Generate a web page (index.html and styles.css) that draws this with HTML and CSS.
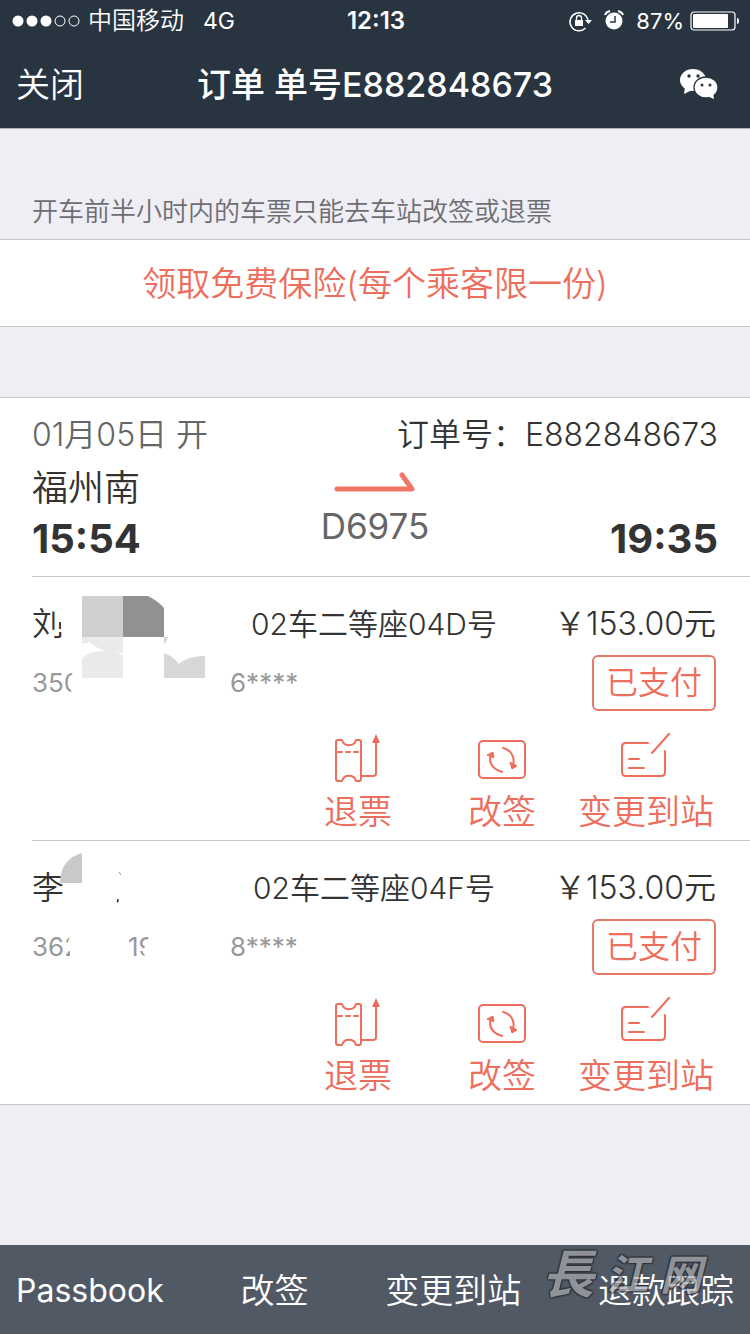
FILE: index.html
```html
<!DOCTYPE html>
<html lang="zh-CN">
<head>
<meta charset="utf-8">
<meta name="viewport" content="width=device-width">
<title>订单 单号E882848673</title>
<link rel="stylesheet" href="styles.css">
</head>
<body>
<svg class="sprite" aria-hidden="true">
  <symbol id="refund" viewBox="0 0 56 56">
    <g fill="none" stroke="currentColor" stroke-width="2" stroke-linejoin="round" stroke-linecap="round">
      <path d="M8 9H12C14 16 24 16 26 9H29Q31 9 31 11V48Q31 50 29 50H26C24 43 14 43 12 50H8Q6 50 6 48V11Q6 9 8 9Z"/>
      <path d="M8 21H31" stroke-dasharray="4 4"/>
      <path d="M32 45H43Q46 45 46 42V10"/>
    </g>
    <path d="M46 3L50 12H42Z" fill="currentColor"/>
  </symbol>
  <symbol id="change" viewBox="0 0 56 56">
    <g fill="none" stroke="currentColor" stroke-width="2" stroke-linecap="round">
      <rect x="5" y="10" width="46" height="37" rx="4"/>
      <path d="M29 17C38 19 42 28 38 36M28 41C19 38 14 32 17 23"/>
    </g>
    <path d="M36 31L38 38L43 35ZM13 24L19 21L20 27Z" fill="currentColor" stroke="currentColor" stroke-linejoin="round"/>
  </symbol>
  <symbol id="station" viewBox="0 0 56 56">
    <g fill="none" stroke="currentColor" stroke-width="2" stroke-linecap="round">
      <path d="M30 12H8Q4 12 4 16V41Q4 45 8 45H43Q47 45 47 41V20M11 28H21M11 37H26M34 22L51 3"/>
    </g>
  </symbol>
</svg>

<header class="top">
  <div class="status">
    <div class="status-left">
      <svg class="signal" viewBox="0 0 68 12" aria-hidden="true">
        <g fill="#fff"><circle cx="6" cy="6" r="5.500"/><circle cx="20" cy="6" r="5.500"/><circle cx="34" cy="6" r="5.500"/></g>
        <g fill="none" stroke="#fff"><circle cx="48" cy="6" r="5"/><circle cx="62" cy="6" r="5"/></g>
      </svg>
      <span>中国移动</span>
      <span class="network">4G</span>
    </div>
    <time class="clock">12:13</time>
    <div class="status-right">
      <svg class="lock" viewBox="0 0 24 22" aria-hidden="true">
        <path d="M17.500 18A9 9 0 1 1 20 11" fill="none" stroke="#fff" stroke-width="1.500"/>
        <path d="M17 10H24L20.500 14Z" fill="#fff"/>
        <rect x="7" y="10" width="8" height="6" fill="#fff"/>
        <path d="M8.500 10V8A2.500 2.500 0 0 1 13.500 8V10" fill="none" stroke="#fff" stroke-width="1.300"/>
      </svg>
      <svg class="alarm" viewBox="0 0 20 22" aria-hidden="true">
        <circle cx="10" cy="11" r="8.500" fill="#fff"/>
        <path d="M1 5Q2 2 6 1M14 1Q18 2 19 5" fill="none" stroke="#fff" stroke-width="2"/>
        <path d="M11 6V12H6" fill="none" stroke="#293441" stroke-width="1.500"/>
      </svg>
      <span class="percent">87%</span>
      <svg class="battery" viewBox="0 0 50 20" aria-hidden="true">
        <rect x="1" y="1" width="44" height="18" rx="3" fill="none" stroke="#fff" stroke-width="1.200"/>
        <rect x="3" y="3" width="35" height="14" rx="1" fill="#fff"/>
        <path d="M47 7Q49 7 49 10Q49 13 47 13Z" fill="#fff"/>
      </svg>
    </div>
  </div>
  <nav class="nav">
    <button class="close" type="button">关闭</button>
    <h1 class="title">订单 单号E882848673</h1>
    <button class="share" type="button" aria-label="微信">
      <svg class="wechat" viewBox="0 0 38 32" aria-hidden="true">
        <ellipse cx="13" cy="11" rx="13" ry="11" fill="#fff"/>
        <path d="M5 18L4 25L12 21Z" fill="#fff"/>
        <ellipse cx="26" cy="18.500" rx="12" ry="10.500" fill="#fff" stroke="#293441" stroke-width="1.300"/>
        <path d="M27 27L34 30L33 24Z" fill="#fff"/>
        <g fill="#293441"><circle cx="9" cy="7" r="1.700"/><circle cx="18" cy="7" r="1.700"/><circle cx="22" cy="16" r="1.500"/><circle cx="30" cy="16" r="1.500"/></g>
      </svg>
    </button>
  </nav>
</header>

<main class="content">
  <p class="hint">开车前半小时内的车票只能去车站改签或退票</p>
  <button class="insurance" type="button">领取免费保险(每个乘客限一份)</button>

  <section class="order">
    <div class="trip">
      <div class="trip-meta">
        <span class="date">01月05日 开</span>
        <span>订单号：E882848673</span>
      </div>
      <div class="route">
        <div>
          <div class="place">福州南</div>
          <time class="time">15:54</time>
        </div>
        <div class="train">
          <svg class="arrow" viewBox="0 0 84 24" aria-hidden="true"><path d="M4 19H79L69 5" fill="none" stroke="#f27566" stroke-width="5" stroke-linecap="round" stroke-linejoin="round"/></svg>
          <span>D6975</span>
        </div>
        <time class="time arrival">19:35</time>
      </div>
    </div>

    <article class="passenger">
      <div class="details">
        <span class="name">刘</span>
        <span>02车二等座04D号</span>
        <span class="price">￥153.00元</span>
      </div>
      <div class="identity">
        <span class="number"><span>350</span><span></span><span>6****</span></span>
        <span class="paid">已支付</span>
      </div>
      <svg class="mosaic" viewBox="32 577 240 130" aria-hidden="true">
        <path d="M57 606H82V650H65V632H57V629H61V622H57Z" fill="#fff"/>
        <path d="M74 665H86V700H74L71 690L70 684L72 675Z" fill="#fff"/>
        <path d="M82 596H123V637H82Z" fill="#cfcfcf"/>
        <path d="M123 596H148Q158 601 164 608V637H123Z" fill="#919191"/>
        <path d="M82 637H123V653L105 651Q96 648 90 642L82 644Z" fill="#eaeaea"/>
        <path d="M82 658Q90 651 105 651Q118 651 123 656V678H82Z" fill="#eaeaea"/>
        <path d="M164 637H168Q167 642 164 644ZM164 653Q173 656 179 664Q188 656 205 656V678H164Z" fill="#d7d7d7"/>
      </svg>
      <div class="actions">
        <button class="action" type="button"><svg class="icon"><use href="#refund"/></svg>退票</button>
        <button class="action" type="button"><svg class="icon"><use href="#change"/></svg>改签</button>
        <button class="action" type="button"><svg class="icon"><use href="#station"/></svg>变更到站</button>
      </div>
    </article>

    <article class="passenger">
      <div class="details">
        <span class="name">李</span>
        <span>02车二等座04F号</span>
        <span class="price">￥153.00元</span>
      </div>
      <div class="identity">
        <span class="number"><span>362</span><span>19</span><span>8****</span></span>
        <span class="paid">已支付</span>
      </div>
      <svg class="mosaic" viewBox="32 841 240 130" aria-hidden="true">
        <path d="M60 883Q60 871 66 863Q73 855 82 853V883Z" fill="#c9c9c9"/>
        <path d="M72 930H84V962H70V951L65 950L68 942Z" fill="#fff"/>
        <path d="M150 930H162V962H148L142 950L146 946L148 940Z" fill="#fff"/>
        <path d="M117 902L118 899V902Z" fill="#333" stroke="#333"/>
        <path d="M119 872L121 875" fill="none" stroke="#999"/>
      </svg>
      <div class="actions">
        <button class="action" type="button"><svg class="icon"><use href="#refund"/></svg>退票</button>
        <button class="action" type="button"><svg class="icon"><use href="#change"/></svg>改签</button>
        <button class="action" type="button"><svg class="icon"><use href="#station"/></svg>变更到站</button>
      </div>
    </article>
  </section>
</main>

<footer class="toolbar">
  <button class="tool passbook" type="button">Passbook</button>
  <button class="tool" type="button">改签</button>
  <button class="tool" type="button">变更到站</button>
  <button class="tool" type="button">退款跟踪</button>
  <div class="watermark"><span class="mark-large">長</span><span class="mark-small">江</span><span class="mark-small">网</span></div>
</footer>
</body>
</html>
```

FILE: styles.css
```css
* {
  box-sizing: border-box;
}

body {
  margin: 0;
  min-height: 100vh;
  display: flex;
  flex-direction: column;
  background: #efeef4;
  color: #333;
  font-family: Inter, "Noto Sans CJK SC", sans-serif;
  font-size: 30px;
  line-height: 40px;
}

button {
  margin: 0;
  padding: 0;
  border: 0;
  background: none;
  color: inherit;
  font: inherit;
}

svg {
  display: block;
  flex: none;
}

.sprite {
  position: absolute;
  width: 0;
  height: 0;
}

.top {
  background: #293441;
  border-bottom: 1px solid #b2b2b2;
  color: #fff;
}

.status {
  display: grid;
  grid-template-columns: 1fr auto 1fr;
  align-items: center;
  height: 41px;
  padding: 0 10px 0 12px;
  font-size: 24px;
}

.status-left,
.status-right {
  display: flex;
  align-items: center;
}

.status-left {
  gap: 8px;
  font-weight: 350;
}

.status-right {
  justify-content: flex-end;
}

.signal {
  width: 68px;
  height: 12px;
}

.network {
  margin-left: 11px;
  font-size: 23px;
  font-weight: 400;
}

.clock {
  font-weight: 600;
}

.lock {
  width: 24px;
  height: 22px;
  margin-right: 12px;
}

.alarm {
  width: 20px;
  height: 22px;
  margin-right: 12px;
}

.percent {
  margin-right: 6px;
  font-size: 22px;
}

.battery {
  width: 50px;
  height: 20px;
}

.nav {
  display: grid;
  grid-template-columns: 1fr auto 1fr;
  align-items: center;
  height: 87px;
  padding: 0 16px;
  font-size: 34px;
}

.close {
  justify-self: start;
  font-weight: 350;
}

.title {
  margin: 0;
  font-size: 34px;
  font-weight: 500;
}

.share {
  justify-self: end;
  padding-right: 16px;
}

.wechat {
  width: 38px;
  height: 32px;
}

.content {
  flex: 1;
}

.hint {
  margin: 0;
  padding: 63px 32px 7px;
  color: #6d6d72;
  font-size: 26px;
  font-weight: 350;
}

.insurance {
  display: block;
  width: 100%;
  height: 88px;
  padding-top: 2px;
  border: solid #c8c7cc;
  border-width: 1px 0;
  background: #fff;
  color: #ed6e5c;
  font-size: 34px;
  font-weight: 350;
}

.order {
  margin-top: 70px;
  padding-left: 32px;
  border: solid #c8c7cc;
  border-width: 1px 0;
  background: #fff;
  font-weight: 350;
}

.trip {
  padding: 17px 32px 11px 0;
}

.trip-meta {
  display: flex;
  justify-content: space-between;
  font-size: 32px;
}

.date {
  color: #666;
}

.route {
  display: grid;
  grid-template-columns: 1fr auto 1fr;
  align-items: end;
  padding-top: 8px;
}

.place {
  line-height: 50px;
  font-size: 36px;
}

.time {
  display: block;
  line-height: 52px;
  font-size: 40px;
  font-weight: 700;
}

.arrival {
  text-align: right;
}

.train {
  display: flex;
  flex-direction: column;
  align-items: center;
  gap: 12px;
  padding-bottom: 19px;
  color: #666;
  font-size: 35px;
  font-weight: 400;
}

.arrow {
  width: 84px;
  height: 24px;
}

.passenger {
  position: relative;
  padding: 27px 34px 5px 0;
  border-top: 1px solid #c8c7cc;
}

.details {
  display: grid;
  grid-template-columns: 1fr auto 1fr;
}

.name {
  font-size: 32px;
}

.price {
  font-size: 32px;
  text-align: right;
}

.identity {
  display: flex;
  justify-content: space-between;
  align-items: center;
  margin-top: 11px;
}

.number {
  display: grid;
  grid-template-columns: 96px 102px auto;
  color: #999;
  font-size: 26px;
  font-weight: 400;
}

.paid {
  padding: 6px 12px;
  border: 2px solid #e87767;
  border-radius: 6px;
  color: #ed6e5c;
  font-size: 32px;
}

.mosaic {
  position: absolute;
  top: 0;
  left: 0;
  width: 240px;
  height: 130px;
}

.actions {
  display: grid;
  grid-template-columns: repeat(3, 140px);
  justify-content: end;
  gap: 4px;
  margin-top: 20px;
}

.action {
  display: flex;
  flex-direction: column;
  align-items: center;
  gap: 2px;
  color: #ed6e5c;
  font-size: 34px;
  line-height: 46px;
}

.icon {
  width: 56px;
  height: 56px;
}

.toolbar {
  position: relative;
  display: flex;
  justify-content: space-between;
  align-items: center;
  height: 89px;
  padding: 2px 16px 0;
  background: #515965;
  color: #fff;
  font-size: 34px;
}

.tool {
  font-weight: 350;
}

.passbook {
  font-size: 32px;
  font-weight: 400;
}

.watermark {
  position: absolute;
  top: 0;
  right: 48px;
  display: flex;
  align-items: center;
  gap: 12px;
  color: #aaacb0;
  font-style: italic;
  font-weight: 700;
  line-height: 60px;
  opacity: 0.7;
  text-shadow: 0 0 2px #20252c, 1px 1px 1px #20252c, -1px -1px 1px #20252c, 1px -1px 1px #20252c, -1px 1px 1px #20252c;
  pointer-events: none;
}

.mark-large {
  font-size: 52px;
}

.mark-small {
  font-size: 42px;
}
```
